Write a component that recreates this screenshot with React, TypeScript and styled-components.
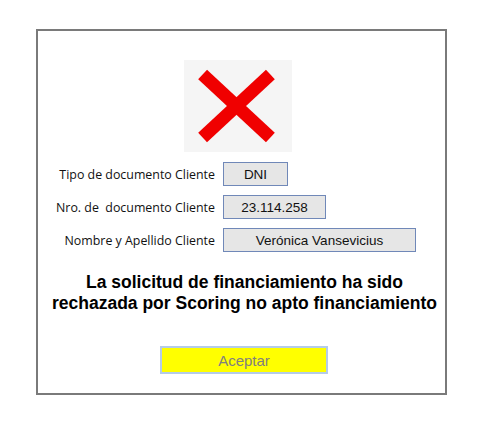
import React from "react";
import styled, { createGlobalStyle } from "styled-components";

const GlobalStyle = createGlobalStyle`
  html, body { margin: 0; padding: 0; background: #ffffff; }
  body { font-family: "Liberation Sans", Arial, sans-serif; }
`;

const Page = styled.div`
  width: 478px;
  height: 424px;
  padding: 29px 0 0 36px;
  box-sizing: border-box;
`;

const Panel = styled.div`
  width: 411px;
  height: 366px;
  box-sizing: border-box;
  border: 2px solid #7a7a7a;
  display: flex;
  flex-direction: column;
  align-items: center;
  padding-top: 29px;
`;

const IconBox = styled.div`
  width: 108px;
  height: 92px;
  background: #f5f5f5;
  margin-left: -7px;
  display: flex;
  align-items: center;
  justify-content: center;
`;

const Form = styled.div`
  margin-top: 10px;
  align-self: stretch;
  display: grid;
  grid-template-columns: 177px auto;
  column-gap: 8px;
  row-gap: 9px;
  align-items: center;
  justify-items: start;
`;

const Label = styled.div`
  justify-self: end;
  font-family: "Open Sans", "Noto Sans", sans-serif;
  font-size: 12.4px;
  color: #111111;
`;

const Field = styled.div<{ $w: number }>`
  width: ${(p) => p.$w}px;
  height: 24px;
  box-sizing: border-box;
  border: 1px solid #7088b8;
  background: #e6e6e6;
  display: flex;
  align-items: center;
  justify-content: center;
  font-family: "Liberation Sans", Arial, sans-serif;
  font-size: 13.5px;
  color: #111111;
`;

const Message = styled.div`
  margin-top: 20px;
  text-align: center;
  font-family: "Liberation Sans", Arial, sans-serif;
  font-weight: bold;
  font-size: 17.5px;
  line-height: 21px;
  color: #000000;
  padding-left: 6px;
`;

const Button = styled.button`
  margin-top: 32px;
  margin-left: 5px;
  width: 168px;
  height: 28px;
  box-sizing: border-box;
  border: 2px solid #b4cbe8;
  background: #ffff00;
  font-family: "Liberation Sans", Arial, sans-serif;
  font-size: 15px;
  color: #808080;
  padding: 0;
  cursor: pointer;
`;

const RedX = () => (
  <svg width="108" height="92" viewBox="0 0 108 92">
    <line x1="18.6" y1="14.6" x2="86.4" y2="77.4" stroke="#f00000" strokeWidth="13" />
    <line x1="86.4" y1="14.6" x2="18.6" y2="77.4" stroke="#f00000" strokeWidth="13" />
  </svg>
);

export default function App() {
  return (
    <>
      <GlobalStyle />
      <Page>
        <Panel>
          <IconBox>
            <RedX />
          </IconBox>
          <Form>
            <Label>Tipo de documento Cliente</Label>
            <Field $w={65}>DNI</Field>
            <Label>Nro. de&nbsp; documento Cliente</Label>
            <Field $w={103}>23.114.258</Field>
            <Label>Nombre y Apellido Cliente</Label>
            <Field $w={193}>Verónica Vansevicius</Field>
          </Form>
          <Message>
            La solicitud de financiamiento ha sido
            <br />
            rechazada por Scoring no apto financiamiento
          </Message>
          <Button>Aceptar</Button>
        </Panel>
      </Page>
    </>
  );
}
